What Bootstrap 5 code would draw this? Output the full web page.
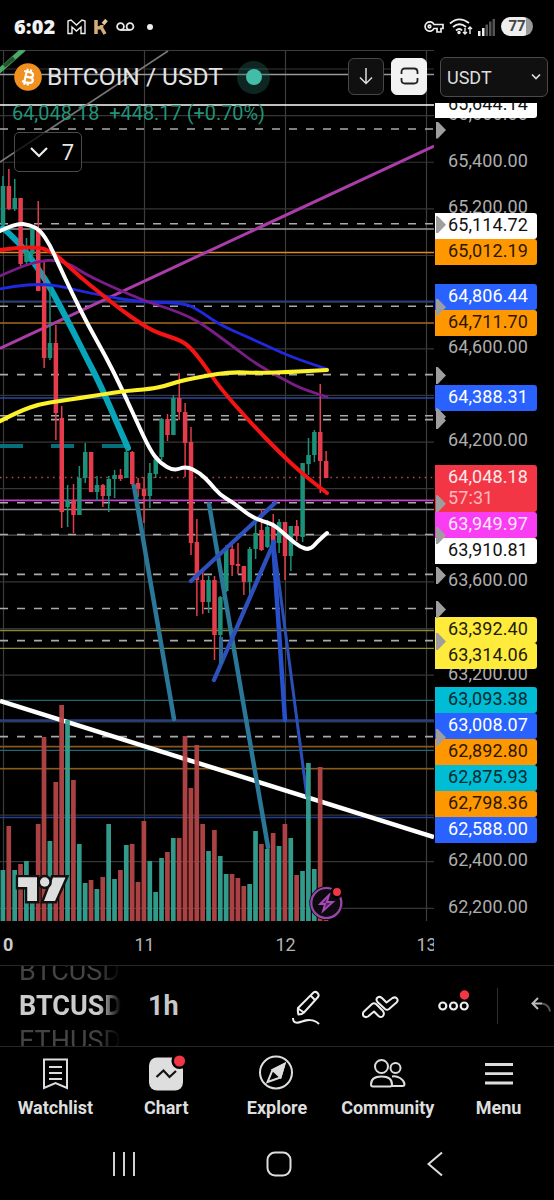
<!DOCTYPE html>
<html lang="en">
<head>
    <meta charset="UTF-8">
    <meta name="viewport" content="width=device-width, initial-scale=1.0">
    <title>BITCOIN / USDT</title>
    <link href="https://cdn.jsdelivr.net/npm/bootstrap@5.3.0/dist/css/bootstrap.min.css" rel="stylesheet">
    <style>
        body {
            background: #000;
            color: #dbdbdb;
            font-family: Roboto, "Liberation Sans", sans-serif;
            width: 554px;
            height: 1200px;
            overflow: hidden;
        }
        svg { display: block; flex-shrink: 0; }
        .status-bar { height: 50px; padding: 3px 21px 0 14px; }
        .clock { font: 800 20px/24px "Open Sans", Roboto, sans-serif; color: #f2f2f2; width: 45px; letter-spacing: .1px; white-space: nowrap; }
        .battery {
            width: 32px; height: 19px; border-radius: 10px; font-size: 15px; line-height: 19px; font-weight: 700;
            color: #444; background: linear-gradient(90deg, #eee 77%, #999 77%);
        }
        .chart-area { height: 915px; }
        .chart-pane { width: 434px; }
        .legend { left: 0; top: 0; width: 434px; }
        .pair-name { font-size: 24.5px; line-height: 28px; color: #e4e4e4; width: 190px; white-space: nowrap; }
        .live-dot { width: 33px; height: 33px; background: rgba(38, 110, 98, .35); }
        .live-dot span { width: 16px; height: 16px; background: #42bda8; }
        .tool-box { width: 36px; height: 37px; border: 1px solid #484848; border-radius: 6px; background: #101010; }
        .tool-box.active { background: #f2f2f2; border-color: #f2f2f2; }
        .quote { font-size: 19.9px; line-height: 25px; height: 25px; color: #229278; padding-left: 12px; white-space: pre; }
        .count-box {
            width: 68px; height: 40px; margin: 6px 0 0 14px; border: 1px solid #4a4a4a; border-radius: 5px;
            background: rgba(0, 0, 0, .75); font-size: 22px; color: #e6e6e6; padding: 0 7px 0 14px;
        }
        .price-scale { width: 120px; }
        .currency { height: 40px; margin: 7px 6px 6px 6px; width: 108px; border: 1px solid #4a4a4a; border-radius: 6px; background: #101010; font-size: 18px; color: #dedede; padding: 0 6px; }
        .price-axis { overflow: hidden; }
        .tick, .tag { position: absolute; font-size: 18px; white-space: nowrap; letter-spacing: .1px; }
        .tick { left: 14px; line-height: 20px; color: #adadad; }
        .tag { left: 1px; width: 102px; height: 26px; padding-left: 13px; line-height: 24px; border-radius: 0 3px 3px 0; }
        .tag.live { height: 47px; line-height: 22px; padding-top: 1px; color: #ffe9eb; }
        .tag.live small { display: block; font-size: 18px; line-height: 20px; color: #ffb9bf; }
        .marker { position: absolute; left: 2px; width: 10px; height: 17px; background: #9e9e9e; clip-path: polygon(0 0, 18% 0, 100% 50%, 18% 100%, 0 100%); }
        .time-axis { height: 44px; font-size: 18px; line-height: 47px; color: #b4b4b4; overflow: hidden; }
        .time-axis span { width: 141px; flex-shrink: 0; text-align: center; }
        .time-axis span:first-child { width: 74px; padding-left: 3px; text-align: left; font-weight: 700; color: #ccc; }
        .symbol-bar { height: 82px; border-top: 1px solid #262626; border-bottom: 1px solid #262626; padding-left: 19px; }
        .symbol-wheel {
            width: 102px; height: 80px; overflow: hidden; font-size: 27px; line-height: 35px; white-space: nowrap;
            -webkit-mask-image: linear-gradient(90deg, #000 78%, transparent);
        }
        .symbol-wheel div { color: #444; }
        .symbol-wheel .current { color: #ccc; font-weight: 700; font-size: 27px; }
        .interval { font-size: 27px; font-weight: 700; color: #c8c8c8; width: 125px; padding-left: 27px; }
        .bar-rule { width: 1px; height: 36px; background: #303030; }
        .tab-bar { height: 76px; padding-top: 6px; }
        .tab-bar a { width: 111px; color: #dedede; text-decoration: none; font-size: 18px; font-weight: 700; line-height: 24px; }
        .tab-bar svg { margin-bottom: 4px; }
        .system-bar { height: 77px; }
    </style>
</head>
<body class="d-flex flex-column">
    <!-- Status bar -->
    <header class="status-bar d-flex align-items-center">
        <span class="clock">6:02</span>
        <svg class="ms-2" width="19" height="16" fill="none" stroke="#eee" stroke-width="1.4"><path d="M1 14.5V2l3-1 5.500 5 5.500-5 3 1v12.500h-4V8l-4.500 4L5 8v6.500z"/></svg>
        <svg class="ms-2" width="14" height="16" fill="none" stroke="#d6ad78" stroke-width="3.500"><path d="M2 1v14M2 9c4 0 6-1 6-3M7 8l4 7"/><path d="M9 5l3.500-4" stroke="#e8c89b"/></svg>
        <svg class="ms-2" width="19" height="10" fill="none" stroke="#e8e8e8" stroke-width="1.800"><circle cx="4.500" cy="4.500" r="3.400"/><circle cx="14" cy="4.500" r="3.400"/><path d="M4.500 8H14"/></svg>
        <svg style="margin-left:12px" width="6" height="6" fill="#eee"><circle cx="3" cy="3" r="3"/></svg>
        <div class="ms-auto d-flex align-items-center">
            <svg width="20" height="14" fill="none" stroke="#eee" stroke-width="1.700"><path d="M10 4.500h9v4h-2v3.500h-4V8.500h-3A4.700 4.700 0 1 1 10 4.500z"/><circle cx="5.500" cy="6.500" r="1.300"/></svg>
            <svg style="margin-left:5px" width="26" height="18" fill="none" stroke="#eee" stroke-width="1.900"><path d="M1 5.500Q10-2.500 20 5M4 9q6.500-5.500 13 0M7 12.500q3.500-3 6 0"/><circle cx="10" cy="14.500" r=".8"/><path d="M16 10v6m-2-2l2 2 2-2M21 16V9m-2 2l2-2 2 2" stroke-width="1.400"/></svg>
            <svg style="margin-left:3px" width="18" height="18" fill="#eee"><path d="M0 13h2.500v5H0zM4 10h2.500v8H4z"/><path fill="#555" d="M7.500 6.500H10V18H7.500zM11 3.500h2.500V18H11zM14.500 1H17v17h-2.500z"/></svg>
            <span class="battery text-center" style="margin-left:5px">77</span>
        </div>
    </header>

    <!-- Chart -->
    <main class="chart-area d-flex">
        <div class="chart-pane position-relative">
            <svg id="chart" width="434" height="871" viewBox="0 50 434 871" fill="none"></svg>
            <div class="legend position-absolute">
                <div class="d-flex align-items-center" style="height:51px;padding:3px 7px 0 14px">
                    <svg class="me-2" width="28" height="28" viewBox="0 0 28 28"><circle cx="14" cy="14" r="13.800" fill="#f0901f"/><g transform="rotate(13 14 14)" fill="none" stroke="#fff" stroke-width="2.200"><path d="M9 9h6.500q3 0 3 2.500T15.500 14H11h5q3.500 0 3.500 2.700T16 19.500H9M11.500 9v10.500M12 6v3M15.500 6v3M12 19.500v3M15.500 19.500v3"/></g></svg>
                    <span class="pair-name" style="margin-left:-3px">BITCOIN / USDT</span>
                    <span class="live-dot rounded-circle d-flex align-items-center justify-content-center"><span class="rounded-circle"></span></span>
                    <div class="d-flex ms-auto" style="gap:7px;margin-top:-2px">
                        <span class="tool-box d-flex align-items-center justify-content-center"><svg width="16" height="18" fill="none" stroke="#ddd" stroke-width="1.500"><path d="M8 1v15M2 10.500l6 6 6-6"/></svg></span>
                        <span class="tool-box active d-flex align-items-center justify-content-center"><svg width="19" height="19" fill="none" stroke="#222" stroke-width="1.800"><path d="M1.500 7V5q0-3.500 3.500-3.500h9q3.500 0 3.500 3.500v2M1.500 11v2q0 3.500 3.500 3.500h9q3.500 0 3.500-3.500v-2"/></svg></span>
                    </div>
                </div>
                <div class="quote">64,048.18  +448.17 (+0.70%)</div>
                <div class="count-box d-flex align-items-center justify-content-between"><svg width="20" height="12" fill="none" stroke="#eee" stroke-width="2.200"><path d="M2 2l8 8 8-8"/></svg><span>7</span></div>
            </div>
        </div>
        <div class="price-scale d-flex flex-column">
            <div class="currency d-flex align-items-center justify-content-between"><span>USDT</span><svg width="10" height="8" fill="none" stroke="#ddd" stroke-width="1.700"><path d="M1 1.500l4 4 4-4"/></svg></div>
            <div id="axis" class="price-axis flex-grow-1 position-relative"></div>
        </div>
    </main>
    <div class="time-axis d-flex position-relative" style="width:434px;margin-top:-44px"><span>0</span><span>11</span><span>12</span><span>13</span></div>

    <!-- Symbol and drawing tools -->
    <section class="symbol-bar d-flex align-items-center">
        <div class="symbol-wheel d-flex flex-column justify-content-center"><div>BTCUSDT</div><div class="current">BTCUSDT</div><div>ETHUSDT</div></div>
        <span class="interval">1h</span>
        <svg style="margin:3px 0 0 46px" width="30" height="36" fill="none" stroke="#eee" stroke-width="2"><path d="M6 18L21.500 2.500q2-1.500 4 .5t.5 4L12 22.500q-2 2-5.500 2-1-3-.5-6.500zM18.500 5.500l5 5M6 18.500l6 4"/><path d="M1 28c0 6 5 5 9 3.500s12-3 17 2.500"/></svg>
        <svg style="margin:3px 0 0 40px" width="38" height="26" fill="none" stroke="#eee" stroke-width="2" stroke-linejoin="round"><path d="M1.500 17L10 9q2-1.500 4 0l7 7q2 3.500-.5 5.500-2 1.200-4-.5L12 16.500 6 21.500q-2.500 1.500-4.500-.5-1.200-2 0-4zM15.500 2.500q2-1.500 4.500.5l4.500 4.500 6-4.500q3-1.500 4.500.5t-.5 4L27 14q-2 1.500-4 0l-7.500-7q-2-2.500 0-4.500z"/></svg>
        <svg style="margin:-6px 0 0 38px" width="32" height="32" fill="none" stroke="#eee" stroke-width="2.200"><circle cx="4.800" cy="19" r="3.500"/><circle cx="15.500" cy="19" r="3.500"/><circle cx="26.200" cy="19" r="3.500"/><circle cx="26.500" cy="8" r="5.500" fill="#f23645" stroke="#000" stroke-width="1.500"/></svg>
        <span class="bar-rule" style="margin-left:27px"></span>
        <svg style="margin-left:32px" width="22" height="20" fill="none" stroke="#bbb" stroke-width="2"><path d="M8 2L2.500 7.500 8 13M3 7.500h9"/><path d="M12 7.500q7 1 8 8" stroke="#555"/></svg>
    </section>

    <!-- Tabs -->
    <nav class="tab-bar d-flex text-center">
        <a href="#" class="d-flex flex-column align-items-center"><svg width="40" height="39" fill="none" stroke="#ddd" stroke-width="2"><path d="M9 6.500h23v28.500l-11.500-5L9 35zM14 14h13M14 20h13M14 26h13"/></svg>Watchlist</a>
        <a href="#" class="d-flex flex-column align-items-center"><svg width="40" height="39" fill="none"><rect x="3" y="4.500" width="34" height="33" rx="8" fill="#dedede"/><path d="M10.500 24l7-6.500 6 6.500 6.500-6" stroke="#111" stroke-width="2.200"/><circle cx="33.500" cy="8" r="6.800" fill="#f23645" stroke="#000" stroke-width="2.500"/></svg>Chart</a>
        <a href="#" class="d-flex flex-column align-items-center"><svg width="40" height="39" fill="none" stroke="#ddd" stroke-width="2"><circle cx="19" cy="19.500" r="16"/><path d="M27.500 11l-4 13.500-13 4.500 5-12z"/><path d="M27.500 11l-4 13.500-8-7.500z" fill="#ddd"/></svg>Explore</a>
        <a href="#" class="d-flex flex-column align-items-center"><svg width="40" height="39" fill="none" stroke="#ddd" stroke-width="2"><circle cx="13.500" cy="13.500" r="6.500"/><circle cx="27.500" cy="15" r="5"/><path d="M3 31.500c0-6 5-8 10.500-8s10.500 2 10.500 8q0 2-2 2H5q-2 0-2-2zM24 23.500q4-1 8 1.500t4.500 6q0 2-2 2H24"/></svg>Community</a>
        <a href="#" class="d-flex flex-column align-items-center"><svg width="40" height="39" fill="none" stroke="#ddd" stroke-width="2.800"><path d="M6 11.500h28M6 20.700h28M6 30h28"/></svg>Menu</a>
    </nav>

    <!-- System buttons -->
    <footer class="system-bar d-flex align-items-center justify-content-center" style="padding:5px 0 0 2px">
        <svg width="24" height="26" fill="none" stroke="#ddd" stroke-width="1.900"><path d="M2 1v24M12 1v24M22 1v24"/></svg>
        <svg style="margin:0 146px 0 130px" width="26" height="26" fill="none" stroke="#ddd" stroke-width="2"><rect x="1.500" y="1.500" width="23" height="23" rx="7.500"/></svg>
        <svg style="margin-left:-11px" width="17" height="26" fill="none" stroke="#ddd" stroke-width="2"><path d="M15 1.500L1.500 13 15 24.500"/></svg>
    </footer>

    <script>
        // [color, high, body top, body bottom, low, volume top]
        const bars = [
            'g 176 186 225 226 870', 'r 169 186 209 210 826', 'g 179 198 209 211 870', 'r 198 198 264 266 864',
            'g 238 252 262 264 861', 'g 226 228 254 260 885', 'r 201 228 291 291 824', 'r 262 283 358 368 737',
            'g 285 343 358 360 841', 'r 325 343 413 440 782', 'r 406 418 512 528 705', 'g 485 500 507 527 720',
            'r 484 500 515 533 780', 'g 466 478 515 515 844', 'g 443 452 478 483 883', 'r 452 452 492 492 880',
            'g 476 485 492 501 889', 'r 484 485 496 507 877', 'g 476 479 496 512 824', 'g 470 475 479 498 879',
            'r 469 475 479 481 870', 'g 448 452 478 478 845', 'r 451 452 484 486 844', 'r 478 483 489 497 882',
            'r 477 489 496 523 821', 'g 463 473 496 508 861', 'g 455 459 474 478 892', 'g 418 419 457 460 858',
            'r 414 419 435 441 852', 'g 395 398 435 435 838', 'r 373 398 412 420 838', 'r 403 412 443 477 736',
            'r 427 442 543 555 788', 'r 519 542 580 616 745', 'r 570 580 602 614 824', 'g 576 580 602 613 851',
            'r 576 580 635 660 830', 'g 596 597 635 665 856', 'g 545 549 591 592 874', 'r 545 549 565 576 874',
            'r 543 564 566 574 878', 'r 566 566 582 595 886', 'g 547 549 582 595 884', 'g 520 533 549 559 831',
            'r 509 530 550 551 844', 'g 520 527 547 548 849', 'r 514 527 546 548 833', 'g 519 522 543 553 846',
            'r 522 522 556 580 824', 'g 526 526 556 571 838', 'r 520 526 536 541 875', 'g 463 463 537 542 871',
            'g 438 455 464 475 763', 'g 430 432 455 462 869', 'r 384 432 461 493 767', 'r 451 461 478 478 919'
        ];
        const levels = [
            [74.5, '#999', 1.3], [105, '#fff', 1.6], [229, '#999', 1.6], [252.5, '#e08a1c', 1.6], [301.3, '#243f80', 1.8],
            [323, '#a86a1c', 1.3], [398, '#2b479f', 1.3], [500.3, '#c63ccb', 1.8], [509.500, '#8c908c', 1.3], [535, '#4b4b4b', 1],
            [630.5, '#8c8436', 1.6], [648.3, '#948b35', 1.3], [700.300, '#226478', 1.3], [720.5, '#27407f', 2.5],
            [746.700, '#8b5420', 1.8], [750.300, '#1d6771', 1.2], [768.700, '#8b5a18', 1.5], [817.500, '#263f90', 1.5]
        ];
        const dashes = [129, 223.7, 306.3, 374.6, 415.7, 419.6, 502.8, 534.5, 574.4, 608.5, 640.6, 736.6];

        const line = (x1, y1, x2, y2, color, w, extra = '') =>
            `<path d="M${x1} ${y1}L${x2} ${y2}" stroke="${color}" stroke-width="${w}" ${extra}/>`;

        // smooth path through the points, midpoints as joints
        function curve(points, color, w) {
            const p = points.split(' ').map(s => s.split(',').map(Number));
            let d = `M${p[0]}`;
            for (let i = 1; i < p.length - 1; i++) {
                d += `Q${p[i]} ${(p[i][0] + p[i + 1][0]) / 2},${(p[i][1] + p[i + 1][1]) / 2}`;
            }
            d += `L${p[p.length - 1]}`;
            return `<path d="${d}" stroke="${color}" stroke-width="${w}" stroke-linecap="round"/>`;
        }

        function drawChart() {
            let s = '';
            for (let k = 0; k < 4; k++) s += line(3.5 + 141 * k, 50, 3.5 + 141 * k, 921, '#3c3c3c', 1.2);
            for (let k = 0; k < 19; k++) s += line(0, 69 + 46.63 * k, 434, 69 + 46.63 * k, '#363636', 1.2);
            s += line(0, 50.5, 434, 50.5, '#3c3c3c', 1);
            levels.forEach(([y, c, w]) => s += line(0, y, 434, y, c, w));
            dashes.forEach(y => s += line(0, y, 434, y, '#aaa', 1.6, 'stroke-dasharray="8 9"'));
            s += line(0, 477.5, 434, 477.5, '#c04a50', 1.4, 'stroke-dasharray="1.500 4.400"');
            s += line(0, 446, 128, 446, '#03707c', 4, 'stroke-dasharray="23 28"');

            s += line(-2, 72, 24, 49, '#4aa868', 5) + line(4, 66, 14, 58, '#24552f', 4);
            s += line(0, 162, 168, 51, '#777', 1.5);
            s += line(0, 348.5, 434, 146, '#aa3da8', 3);
            s += line(0, 701, 434, 837, '#fff', 4.5);
            s += curve('3,228 20,243 37,267 50,287 70,325 86,357 100,384 117,423 128,448', '#08a4b9', 6);

            bars.forEach((bar, i) => {
                const [c, hi, top, bottom, lo] = bar.split(' ');
                const x = 3 + 5.875 * i;
                const color = c === 'g' ? '#1c9078' : '#e43c4c';
                s += line(x, hi, x, lo, color, 1.5) + line(x, top, x, bottom, color, 4.5);
            });

            s += line(134, 486, 174, 719, '#2a7798', 4.5, 'stroke-linecap="round"');
            s += line(209, 504, 268, 847, '#2a7798', 4.5, 'stroke-linecap="round"');
            s += line(191, 581, 275, 503, '#2d50bd', 4.3, 'stroke-linecap="round"');
            s += line(214, 680, 274, 542, '#2d50bd', 4.3, 'stroke-linecap="round"');
            s += line(221, 637, 221, 664, '#2a6699', 4);
            s += line(273, 542, 285, 720, '#2750cb', 4.5, 'stroke-linecap="round"');
            s += line(274, 545, 307, 797, '#2b4fb8', 3);

            s += curve('0,289 14,286 40,284 60,286 80,291 110,297 140,302 185,303 200,311 220,325 250,338 280,352 300,360 327,369', '#2028e0', 2.8);
            s += curve('0,276 20,267 40,261 55,260 70,264 85,274 110,286 145,301 170,309 190,317 205,326 220,337 235,348 252,361 270,372 285,380 300,388 327,397', '#7b1d88', 2.8);
            s += curve('0,250 16,248 38,247 50,251 60,258 80,277 100,293 120,309 140,323 155,332 180,340 190,347 203,363 220,388 250,422 280,453 305,476 327,493', '#f51414', 4);
            s += curve('0,231 16,223 30,225 40,230 50,245 58,263 72,293 88,325 106,357 120,385 136,420 150,450 160,463 174,471 186,466 200,473 210,483 220,495 234,503 250,516 262,521 272,524 280,530 290,539 300,547 310,550 318,541 327,533', '#fff', 4);
            s += curve('0,421 20,411 40,404 60,401 80,398 105,394 125,391 150,389 165,386 180,381 205,376 230,372 260,373 290,372 327,370', '#fbf22c', 4.2);

            bars.forEach((bar, i) => {
                const [c, , , , , vol] = bar.split(' ');
                const x = 2.9 + 5.875 * i;
                s += line(x, vol, x, 921, c === 'g' ? '#35a292' : '#b34547', 4.7, 'opacity=".95"');
            });

            // logo
            s += `<g fill="#dedede" stroke="#111" stroke-width="5" paint-order="stroke"><path d="M18.300 877.500H37V901H27.500V887H18.300zM53 877.500H65.500L55 901H44z"/><circle cx="44.700" cy="882" r="4.700"/></g>`;
            s += `<g fill="#dedede"><path d="M18.300 877.500H37V901H27.500V887H18.300z"/></g>`;
            // news flash button
            s += `<circle cx="326.300" cy="903" r="17" fill="#0d0a0f"/><circle cx="326.300" cy="903" r="15" stroke="#9a47ab" stroke-width="2.200"/>
                  <path d="M329 895l-9 9h5l-2 7 10-9h-6z" stroke="#a94abb" stroke-width="1.800" fill="#52235c"/>
                  <circle cx="337" cy="892" r="5.200" fill="#f23645" stroke="#000" stroke-width="2.500"/>`;
            document.getElementById('chart').innerHTML = s;
        }

        const ticks = [['65,600.00', 114], ['65,400.00', 160.5], ['65,200.00', 207], ['64,600.00', 347], ['64,200.00', 440], ['63,600.00', 580], ['63,200.00', 673.5], ['62,400.00', 860], ['62,200.00', 906.5]];
        // [text, top, background, text color]
        const tags = [
            ['65,644.14', 92, '#fff', '#111'], ['65,114.72', 213, '#fff', '#111'], ['65,012.19', 239, '#ff9800', '#2b1700'],
            ['64,806.44', 284, '#2962ff', '#fff'], ['64,711.70', 310, '#ff9800', '#2b1700'], ['64,388.31', 385, '#2962ff', '#fff'],
            ['63,949.97', 512, '#f83df2', '#ffe8ff'], ['63,910.81', 538, '#fff', '#111'], ['63,392.40', 617, '#ffeb3b', '#222008'],
            ['63,314.06', 643, '#ffeb3b', '#222008'], ['63,093.38', 687, '#00bcd4', '#002b31'], ['63,008.07', 713, '#2962ff', '#fff'],
            ['62,892.80', 739, '#ff9800', '#2b1700'], ['62,875.93', 765, '#00bcd4', '#002b31'], ['62,798.36', 791, '#ff9800', '#2b1700'],
            ['62,588.00', 817, '#2962ff', '#fff']
        ];

        function drawAxis() {
            const offset = 103;
            let html = '';
            ticks.forEach(([t, y]) => html += `<div class="tick" style="top:${y - 10 - offset}px">${t}</div>`);
            tags.forEach(([t, y, bg, fg]) => html += `<div class="tag" style="top:${y - offset}px;background:${bg};color:${fg}">${t}</div>`);
            html += `<div class="tag live" style="top:${465 - offset}px;background:#f23645">64,048.18<small>57:31</small></div>`;
            dashes.forEach(y => html += `<div class="marker" style="top:${y - 7.5 - offset}px"></div>`);
            document.getElementById('axis').innerHTML = html;
        }

        drawChart();
        drawAxis();
    </script>
    <script src="https://cdn.jsdelivr.net/npm/bootstrap@5.3.0/dist/js/bootstrap.bundle.min.js"></script>
</body>
</html>
